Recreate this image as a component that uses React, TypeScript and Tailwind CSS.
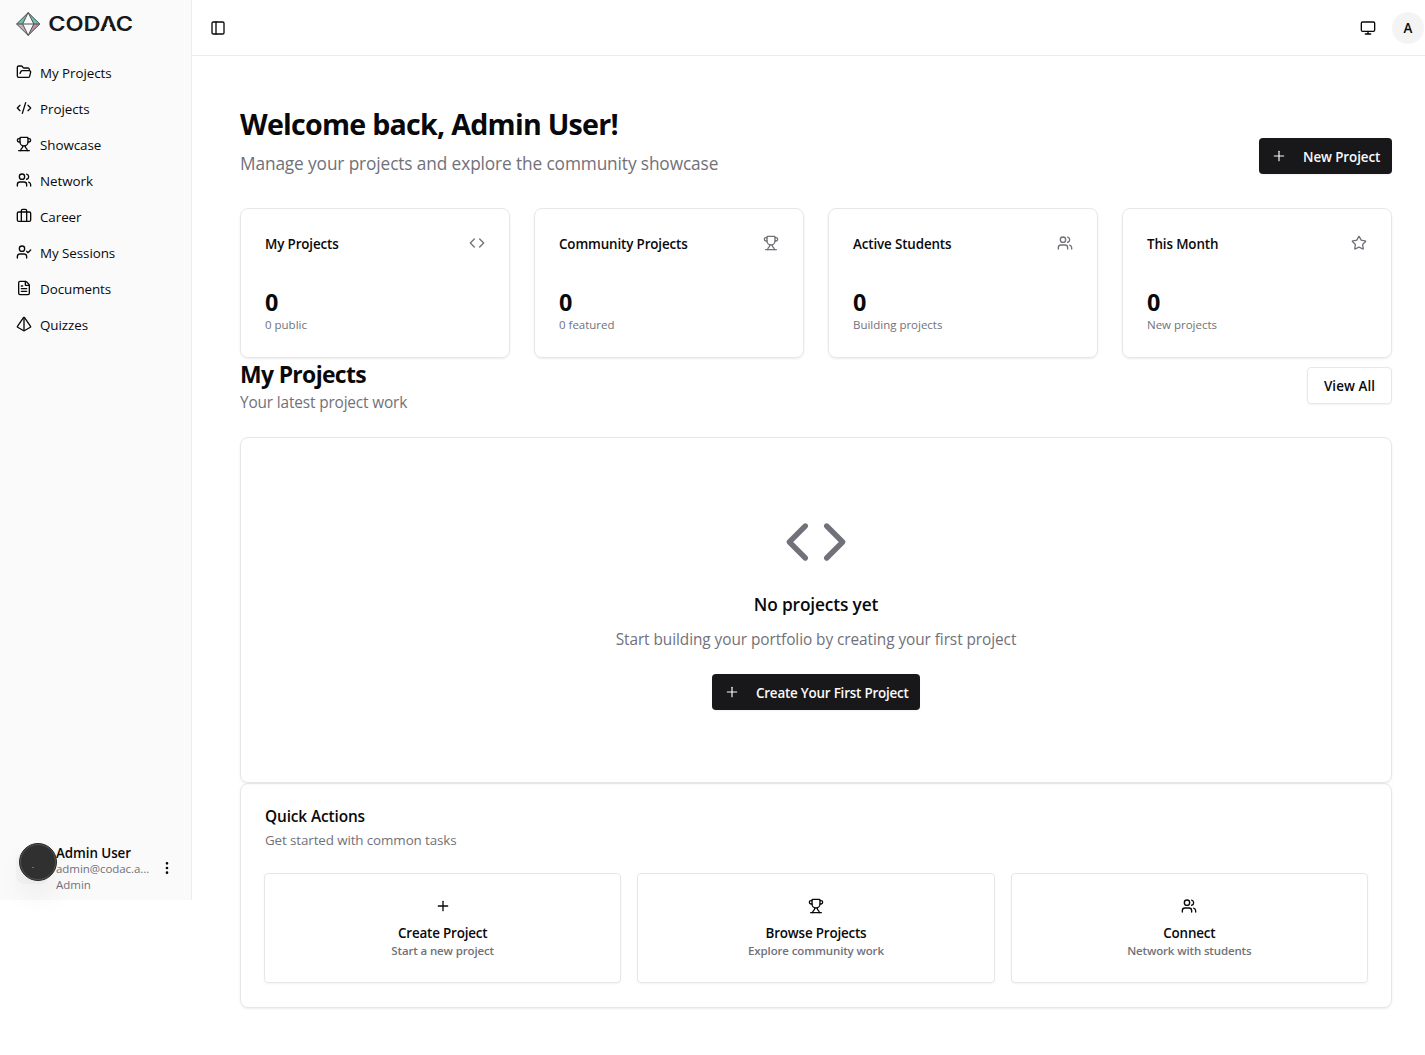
import React from "react";
import {
  Briefcase,
  Code,
  CodeXml,
  EllipsisVertical,
  FileText,
  FolderOpen,
  Monitor,
  PanelLeft,
  Plus,
  Pyramid,
  Star,
  Trophy,
  UserCheck,
  Users,
  type LucideIcon,
} from "lucide-react";

const NAV: { label: string; icon: LucideIcon }[] = [
  { label: "My Projects", icon: FolderOpen },
  { label: "Projects", icon: CodeXml },
  { label: "Showcase", icon: Trophy },
  { label: "Network", icon: Users },
  { label: "Career", icon: Briefcase },
  { label: "My Sessions", icon: UserCheck },
  { label: "Documents", icon: FileText },
  { label: "Quizzes", icon: Pyramid },
];

const STATS: { title: string; value: string; note: string; icon: LucideIcon }[] = [
  { title: "My Projects", value: "0", note: "0 public", icon: Code },
  { title: "Community Projects", value: "0", note: "0 featured", icon: Trophy },
  { title: "Active Students", value: "0", note: "Building projects", icon: Users },
  { title: "This Month", value: "0", note: "New projects", icon: Star },
];

const ACTIONS: { title: string; note: string; icon: LucideIcon }[] = [
  { title: "Create Project", note: "Start a new project", icon: Plus },
  { title: "Browse Projects", note: "Explore community work", icon: Trophy },
  { title: "Connect", note: "Network with students", icon: Users },
];

function Logo() {
  return (
    <div className="flex items-center gap-2">
      <svg width="25" height="24" viewBox="0 0 25 24" fill="none">
        <path d="M12.2.6.6 12h6z" fill="#6cc0ae" />
        <path d="M12.2.6 23.8 12h-6z" fill="#6cc0ae" />
        <path d="M12.2 23.4.6 12h6z" fill="#c5b3bb" />
        <path d="M12.2 23.4 23.8 12h-6z" fill="#c08fa3" />
        <path d="M12.2.6 6.6 12l5.6 11.4L17.8 12z" fill="#fafafa" />
        <path
          d="M12.2.6.6 12l11.6 11.4L23.8 12zM12.2.6 6.6 12l5.6 11.4L17.8 12zM.6 12h23.2"
          stroke="#4b4f52"
          strokeWidth="1"
          strokeLinejoin="round"
        />
      </svg>
      <svg width="84" height="24" viewBox="0 0 84 24">
        <text
          x="-0.8"
          y="18.8"
          textLength="85"
          lengthAdjust="spacingAndGlyphs"
          className="fill-[#18181b] font-['Inter',sans-serif] text-[20px] font-semibold"
        >
          CODAC
        </text>
        {/* opens the crossbar of the A */}
        <path d="M59.2 9 55.4 18.8h7.6z" fill="#fafafa" />
      </svg>
    </div>
  );
}

function PrimaryButton({ label, className }: { label: string; className: string }) {
  return (
    <button
      className={`flex h-9 items-center gap-4 rounded bg-[#18181b] pl-3 text-[13.4px] leading-5 font-semibold whitespace-nowrap text-[#fafafa] shadow-xs ${className}`}
    >
      <Plus className="size-4 shrink-0" strokeWidth={1.75} />
      <span className="pt-0.5">{label}</span>
    </button>
  );
}

function Sidebar() {
  return (
    <aside className="flex h-[900px] w-48 shrink-0 flex-col border-r border-[#ededee] bg-[#fafafa]">
      <div className="flex h-12 items-center pl-4">
        <Logo />
      </div>
      <nav className="flex flex-col gap-1 px-2 pt-2">
        {NAV.map(({ label, icon: Icon }) => (
          <a key={label} className="flex h-8 items-center gap-2 px-2 text-[13.4px] leading-5 tracking-[-0.005em]">
            <Icon className="size-4" />
            <span className="pt-0.5">{label}</span>
          </a>
        ))}
      </nav>
      <div className="mt-auto flex h-16 items-center pl-4">
        <div className="size-8 rounded-lg bg-[#f4f4f5]">
          <div className="relative -top-[9px] left-[3px] flex size-[38px] items-center justify-center rounded-full border border-[#2a2a2a] bg-[#303030] shadow-[0_16px_32px_-8px_rgba(0,0,0,0.16)]">
            <div className="size-[36px] rounded-full border border-[#505050]" />
            <div className="absolute top-[23px] left-[12px] h-px w-[2px] bg-[#6f6f6f]" />
          </div>
        </div>
        <div className="ml-2 w-[98px] pt-0.5 whitespace-nowrap">
          <p className="text-[13.4px] leading-[17px] font-semibold tracking-[-0.005em]">Admin User</p>
          <p className="-mt-px text-[11.5px] leading-4 tracking-[-0.005em] text-[#71717a]">admin@codac.a...</p>
          <p className="text-[11.5px] leading-4 text-[#71717a]">Admin</p>
        </div>
        <EllipsisVertical className="ml-[5px] size-4" />
      </div>
    </aside>
  );
}

export default function App() {
  return (
    <div className="flex min-h-[1055px] bg-white font-['Open_Sans','Noto_Sans',sans-serif] text-[#09090b]">
      <Sidebar />
      <div className="flex min-w-0 flex-1 flex-col">
        <header className="flex h-14 items-center justify-between border-b border-[#ededee] pr-px pl-[18px]">
          <PanelLeft className="size-4" />
          <div className="flex items-center gap-4">
            <Monitor className="size-4" />
            <div className="flex size-8 items-center justify-center rounded-full bg-[#f4f4f5] pt-0.5 text-[13.4px] font-semibold">
              A
            </div>
          </div>
        </header>

        <main className="w-[1200px] pt-12 pl-12">
          <section className="flex items-end justify-between">
            <div>
              <h1 className="mt-0.5 text-[28.6px] leading-9 font-bold tracking-[-0.0256em]">
                Welcome back, Admin User!
              </h1>
              <p className="mt-2 -mb-0.5 text-[17.3px] leading-7 tracking-[-0.007em] text-[#71717a]">
                Manage your projects and explore the community showcase
              </p>
            </div>
            <PrimaryButton label="New Project" className="mb-0.5 w-[133px] tracking-[-0.007em]" />
          </section>

          <section className="mt-[32px] grid grid-cols-4 gap-6">
            {STATS.map(({ title, value, note, icon: Icon }) => (
              <div
                key={title}
                className="h-[150px] rounded-lg border border-[#e7e7e9] px-6 pt-[25px] shadow-[0_1px_2px_0_rgba(0,0,0,0.08)]"
              >
                <div className="flex items-start justify-between">
                  <h3 className="text-[13.4px] leading-5 font-semibold tracking-[-0.01em]">{title}</h3>
                  <Icon className="mt-px size-4 text-[#71717a]" />
                </div>
                <p className="mt-8 text-[23.4px] leading-8 font-bold">{value}</p>
                <p className="-mt-px text-[11.5px] leading-4 tracking-[-0.001em] text-[#71717a]">{note}</p>
              </div>
            ))}
          </section>

          <section className="flex items-center justify-between">
            <div className="pt-px">
              <h2 className="text-[22.9px] leading-8 font-bold tracking-[-0.028em]">My Projects</h2>
              <p className="-mb-px text-[15.4px] leading-6 tracking-[-0.01em] text-[#71717a]">
                Your latest project work
              </p>
            </div>
            <button className="mb-px h-[37px] rounded border border-[#e7e7e9] px-4 pt-px text-[13.4px] font-semibold tracking-[0.005em] shadow-xs">
              View All
            </button>
          </section>

          <section className="mt-[23px] flex h-[346px] flex-col items-center rounded-lg border border-[#e7e7e9] pt-[72px] shadow-[0_1px_2px_0_rgba(0,0,0,0.08)]">
            <Code className="size-16 text-[#71717a]" />
            <h3 className="mt-[17px] text-[17.3px] leading-7 font-semibold tracking-[-0.008em]">No projects yet</h3>
            <p className="mt-[9px] mb-[22px] text-[15.4px] leading-6 tracking-[-0.0046em] text-[#71717a]">
              Start building your portfolio by creating your first project
            </p>
            <PrimaryButton label="Create Your First Project" className="w-[208px] tracking-[-0.015em]" />
          </section>

          <section className="h-[225px] rounded-lg border border-[#e7e7e9] p-6 shadow-[0_1px_2px_0_rgba(0,0,0,0.08)]">
            <h3 className="pt-px text-[15.4px] leading-4 font-semibold tracking-[-0.0075em]">Quick Actions</h3>
            <p className="mt-[5px] text-[13.4px] leading-5 tracking-[-0.0085em] text-[#71717a]">
              Get started with common tasks
            </p>
            <div className="-mx-px mt-[23px] grid grid-cols-3 gap-4">
              {ACTIONS.map(({ title, note, icon: Icon }) => (
                <button
                  key={title}
                  className="flex h-[110px] flex-col items-center rounded border border-[#e7e7e9] pt-6 shadow-xs"
                >
                  <Icon className="size-4" />
                  <span className="mt-[9px] text-[13.4px] leading-5 font-semibold tracking-[-0.013em]">{title}</span>
                  <span className="text-[11.5px] leading-4 font-semibold tracking-[-0.012em] text-[#71717a]">
                    {note}
                  </span>
                </button>
              ))}
            </div>
          </section>
        </main>
      </div>
    </div>
  );
}
